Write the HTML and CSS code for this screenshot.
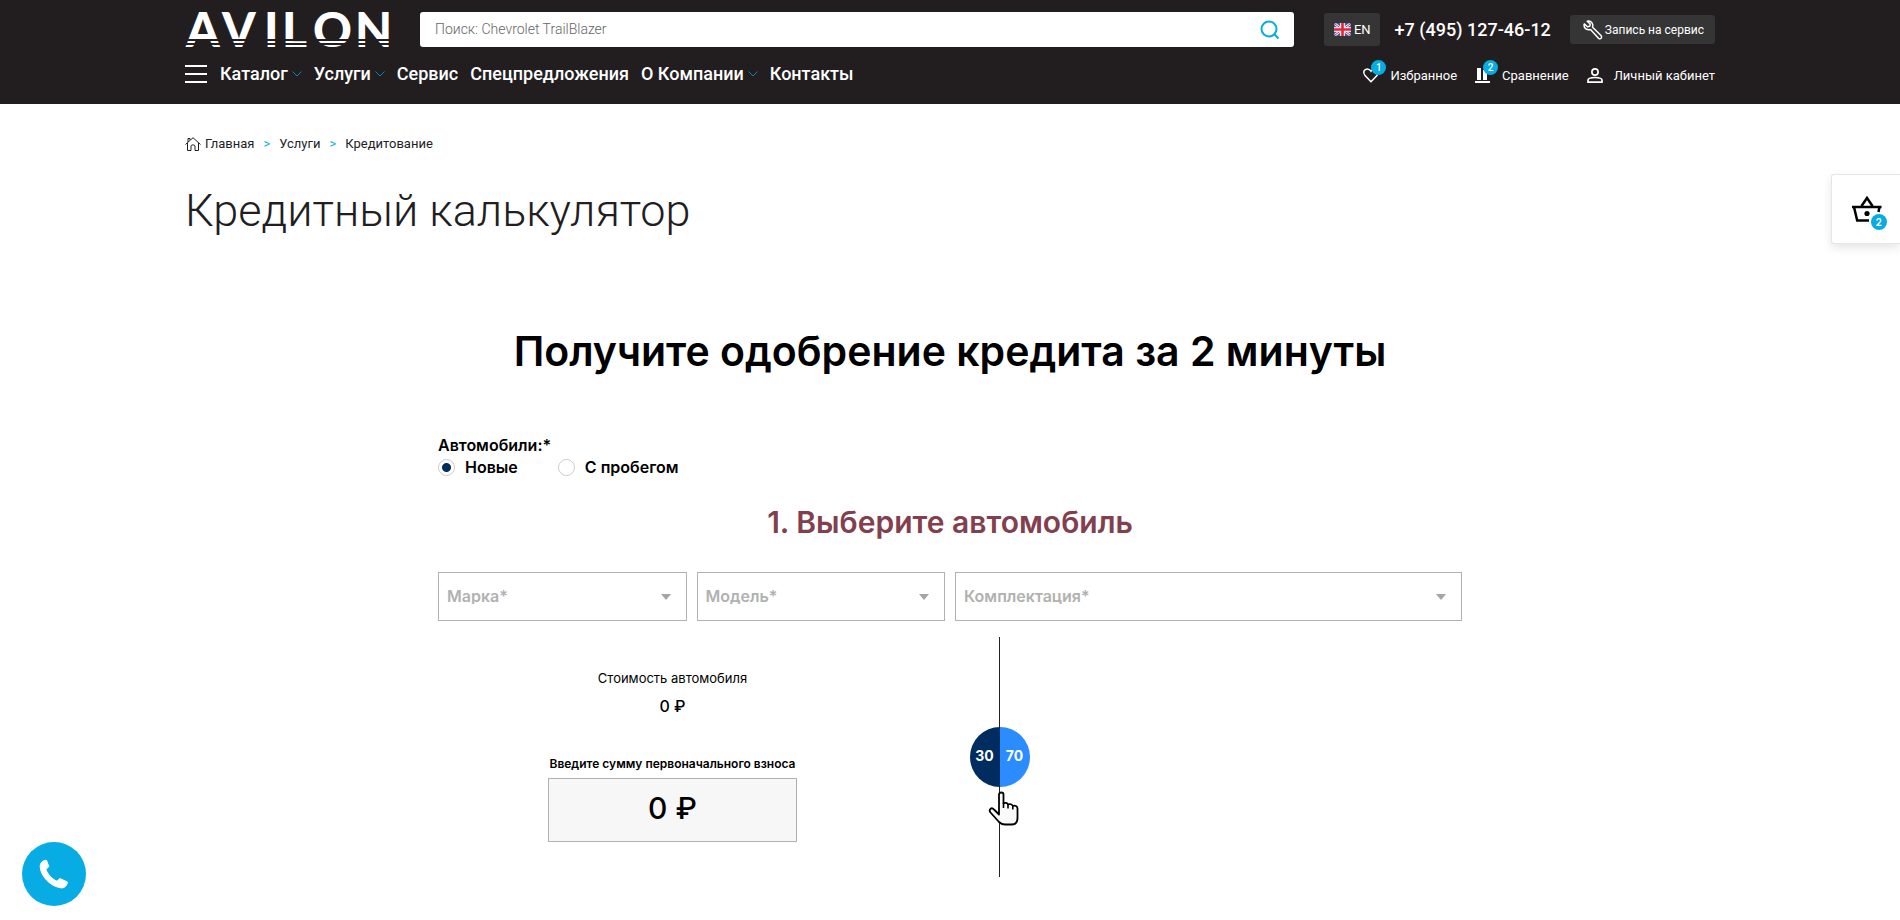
FILE: index.html
```html
<!DOCTYPE html>
<html lang="ru">
<head>
<meta charset="utf-8">
<meta name="viewport" content="width=device-width, initial-scale=1">
<title>Кредитный калькулятор</title>
<link rel="stylesheet" href="styles.css">
</head>
<body>
<header class="header">
  <div class="container header-top">
    <a class="logo" href="#" aria-label="AVILON">
      <svg width="205" height="35" viewBox="0 0 205 35">
        <g class="logo-text">
          <text x="1 37 79 97 128 170" y="35">AVILON</text>
        </g>
        <path d="M0 28H205M0 32H205" stroke="#221e1f" stroke-width="2"/>
      </svg>
    </a>
    <form class="search" role="search">
      <input class="search-input" type="search" placeholder="Поиск: Chevrolet TrailBlazer" aria-label="Поиск">
      <button class="search-button" type="button" aria-label="Найти">
        <svg width="20" height="20" viewBox="0 0 20 20" fill="none" stroke="#06ace3" stroke-width="2"><circle cx="9" cy="9" r="7.500"/><path d="M14.300 14.300 18.500 18.500"/></svg>
      </button>
    </form>
    <button class="lang" type="button">
      <svg width="17" height="13" viewBox="0 0 17 13"><path fill="#3d58a8" d="M0 0H17V13H0z"/><path d="M1 1 16 12M16 1 1 12" stroke="#fff" stroke-width="2.600"/><path d="M1 1 16 12M16 1 1 12" stroke="#e0243b" stroke-width="1"/><path d="M8.500 0V13M0 6.500H17" stroke="#fff" stroke-width="4.600"/><path d="M8.500 0V13M0 6.500H17" stroke="#e0243b" stroke-width="2.600"/></svg>
      EN
    </button>
    <a class="phone" href="tel:+74951274612">+7 (495) 127-46-12</a>
    <button class="service" type="button">
      <svg width="20" height="20" viewBox="0 0 20 20" fill="none" stroke="#fff" stroke-width="1.500" stroke-linejoin="round"><path d="M5.500 1C8.500 1 10.500 4 9.600 7.200L18 15.500C19.800 17.500 17.300 20 15.500 18.200L7.500 9.600C4 10.600 1 8.300 1 5.200L1.300 3.900 4.400 6.800 6.800 6.200 7.200 4 4.200 1.200z"/></svg>
      Запись на сервис
    </button>
  </div>
  <div class="container header-bottom">
    <button class="burger" type="button" aria-label="Меню"><span></span><span></span><span></span></button>
    <nav class="nav">
      <a href="#">Каталог<svg class="chevron" width="10" height="6" viewBox="0 0 10 6"><path d="M.5.500 5 5 9.500.500"/></svg></a>
      <a href="#">Услуги<svg class="chevron" width="10" height="6" viewBox="0 0 10 6"><path d="M.5.500 5 5 9.500.500"/></svg></a>
      <a href="#">Сервис</a>
      <a href="#">Спецпредложения</a>
      <a href="#">О Компании<svg class="chevron" width="10" height="6" viewBox="0 0 10 6"><path d="M.5.500 5 5 9.500.500"/></svg></a>
      <a href="#">Контакты</a>
    </nav>
    <div class="account">
      <a href="#">
        <span class="icon">
          <svg width="16" height="15" viewBox="0 0 16 15" fill="none" stroke="#fff" stroke-width="1.500"><path d="M8 13.700 2 7.600C-.5 4.500 1 1 4.300 1 6 1 7.200 1.900 8 3.200 8.800 1.900 10 1 11.700 1 15 1 16.500 4.500 14 7.600z"/></svg>
          <span class="badge">1</span>
        </span>
        Избранное
      </a>
      <a href="#">
        <span class="icon">
          <svg width="16" height="15" viewBox="0 0 16 15" fill="#fff"><path d="M2 0H6V12H2zM8 2H12V12H8zM0 13H15V15H0z"/></svg>
          <span class="badge">2</span>
        </span>
        Сравнение
      </a>
      <a href="#">
        <span class="icon">
          <svg width="16" height="15" viewBox="0 0 16 15" fill="none" stroke="#fff" stroke-width="1.700"><circle cx="8" cy="4" r="3.100"/><path d="M1 14.100V12.300C1 10.600 4.500 9.500 8 9.500S15 10.600 15 12.300V14.100z"/></svg>
        </span>
        Личный кабинет
      </a>
    </div>
  </div>
</header>

<main class="container">
  <nav class="crumbs" aria-label="Навигация">
    <a href="#"><svg width="16" height="14" viewBox="0 0 16 14" fill="none" stroke="#221e1f"><path d="M.5 7.500 8 .7 15.500 7.500M2.500 6V13.500H6V9C6 7.500 10 7.500 10 9V13.500H13.500V6M3 5V1.500H5V3"/></svg>Главная</a>
    <span class="sep">&gt;</span>
    <a href="#">Услуги</a>
    <span class="sep">&gt;</span>
    <span>Кредитование</span>
  </nav>
  <h1 class="title">Кредитный калькулятор</h1>

  <form class="calc">
    <h2 class="calc-title">Получите одобрение кредита за 2 минуты</h2>
    <fieldset class="kind">
      <legend>Автомобили:*</legend>
      <div class="kind-options">
        <label><input type="radio" name="kind" checked>Новые</label>
        <label><input type="radio" name="kind">С пробегом</label>
      </div>
    </fieldset>
    <h3 class="step">1. Выберите автомобиль</h3>
    <div class="selects">
      <div class="select"><select aria-label="Марка"><option>Марка*</option></select></div>
      <div class="select"><select aria-label="Модель"><option>Модель*</option></select></div>
      <div class="select wide"><select aria-label="Комплектация"><option>Комплектация*</option></select></div>
    </div>
    <div class="payment">
      <div class="sums">
        <p class="price-label">Стоимость автомобиля</p>
        <p class="price">0 ₽</p>
        <label class="deposit-label" for="deposit">Введите сумму первоначального взноса</label>
        <input class="deposit" id="deposit" type="text" value="0 ₽">
      </div>
      <div class="slider">
        <div class="knob"><span>30</span><span>70</span></div>
        <svg class="hand" width="32" height="35" viewBox="0 0 32 35"><path d="M11 23.500V3.500C11 .8 15.500.8 15.500 3.500V12.500C17 11.300 19.500 11.800 20 13.500 22 12.500 24.300 13.300 24.800 15 27 14 29.500 15 29.500 17.500V27C29.500 31.500 27 33.500 23.500 33.500H17C14.500 33.500 12.500 32.500 11 31L2.500 21.500C.3 18.500 3.500 15.800 6 18.500z" fill="#fafafa" stroke="#000" stroke-width="1.800" stroke-linejoin="round"/><path d="M15.500 12V17M20 13.500V17.500M24.800 15V18.500" stroke="#000" stroke-width="1.600"/></svg>
      </div>
    </div>
  </form>
</main>

<a class="cart" href="#" aria-label="Корзина">
  <svg width="30" height="26" viewBox="0 0 30 26" fill="none" stroke="#000" stroke-width="2.500"><path d="M9.500 10 15 2 20.500 10M0 11H29.500M2 11 5.200 24.500H17M27.500 11 26.500 16"/><circle cx="15" cy="17.500" r="2.600" fill="#000" stroke="none"/></svg>
  <span class="badge cart-badge">2</span>
</a>
<button class="callback" type="button" aria-label="Позвонить">
  <svg width="30" height="30" viewBox="0 0 30 30"><path fill="#fff" d="M7.500 1.300 9.800 7.500 7 10.500C8.500 15 13 20 18 22.300L20.700 19.500 28.500 23C28 27 25 29.500 21.500 28.800 11 27 2 17.500 1.200 8 1 4 3.500 1.300 7.500 1.300z" stroke="#fff" stroke-linejoin="round"/></svg>
</button>
</body>
</html>
```

FILE: styles.css
```css
* { box-sizing: border-box; }
body { margin: 0; background: #fff; color: #221e1f; font-family: Roboto, sans-serif; font-size: 13px; line-height: 16px; }
a { color: inherit; text-decoration: none; }
button, input, select { font: inherit; color: inherit; }
button { border: 0; padding: 0; background: none; cursor: pointer; }
svg { display: block; flex: none; overflow: visible; }

.container { width: 100%; max-width: 1562px; margin: 0 auto; padding: 0 16px; }

.header { background: #221e1f; color: #fff; padding: 12px 0 18px; }
.header-top { display: flex; align-items: center; }
.logo-text { font-family: Lato, sans-serif; font-weight: 900; font-size: 48px; fill: #fff; }
.search { flex: 1; display: flex; margin: 0 30px; height: 35px; background: #fff; border-radius: 3px; }
.search-input { flex: 1; min-width: 0; border: 0; background: none; padding: 0 15px 2px; color: #221e1f; font-weight: 300; font-size: 14px; outline: 0; }
.search-input::placeholder { color: #666; opacity: 1; }
.search-button { padding: 0 14px; }
.lang, .service { display: flex; align-items: center; background: #353535; border-radius: 3px; }
.lang { gap: 3px; height: 33px; padding: 0 9px 0 10px; }
.phone { margin: 0 19px 0 15px; font-size: 18px; line-height: 24px; font-weight: 500; }
.service { gap: 2px; height: 29px; padding: 0 11px 0 13px; font-size: 12px; }

.header-bottom { display: flex; align-items: center; margin-top: 15px; }
.burger { display: grid; gap: 6px; width: 22px; margin-right: 13px; }
.burger span { height: 2px; background: #fff; }
.nav { display: flex; gap: 12px; font-size: 18px; line-height: 24px; font-weight: 500; }
.nav a { display: flex; align-items: center; gap: 4px; }
.chevron { fill: none; stroke: #0787b1; }
.account { display: flex; gap: 18px; margin-left: auto; padding-top: 3px; }
.account a { display: flex; align-items: center; gap: 11px; }
.icon { position: relative; }
.badge { position: absolute; left: 8px; top: -8px; width: 15px; height: 15px; border-radius: 50%; background: #06ace3; color: #fff; font-size: 10px; line-height: 15px; font-weight: 500; text-align: center; }

.crumbs { display: flex; align-items: center; gap: 9px; margin-top: 32px; }
.crumbs a { display: flex; align-items: center; gap: 4px; }
.sep { color: #06ace3; }
.title { margin: 32px 0 0; font-size: 45px; line-height: 54px; font-weight: 300; }

.calc { max-width: 1024px; margin: 83px auto 0; color: #000; font-family: Inter, sans-serif; }
.calc-title { margin: 0; font-size: 41px; line-height: 60px; font-weight: 600; text-align: center; }
.kind { margin: 53px 0 0; padding: 0; border: 0; font-size: 16px; line-height: 22px; font-weight: 600; }
.kind legend { padding: 0; }
.kind-options { display: flex; gap: 40px; }
.kind-options label { display: flex; align-items: center; gap: 10px; }
.kind-options input { appearance: none; width: 17px; height: 17px; margin: 0; border: 1px solid #ccc; border-radius: 50%; }
.kind-options input:checked { background: radial-gradient(circle, #002c5f 4px, #fff 5px); }
.step { margin: 26px 0 32px; font-size: 30px; line-height: 36px; font-weight: 600; color: #82404f; text-align: center; }
.selects { display: grid; grid-template-columns: repeat(4, 1fr); gap: 10px; }
.select { position: relative; }
.select::after { content: ""; position: absolute; right: 16px; top: 22px; border: 5px solid transparent; border-top: 6px solid #a5a5a5; border-bottom: 0; pointer-events: none; }
.wide { grid-column: span 2; }
.select select { display: block; appearance: none; width: 100%; height: 49px; padding: 0 32px 2px 8px; border: 1px solid #b1b1b1; border-radius: 0; background: #fff; color: #b1b1b1; font-size: 16px; font-weight: 600; }

.payment { display: grid; grid-template-columns: 469fr 185fr 370fr; margin-top: 16px; }
.sums { display: flex; flex-direction: column; align-items: center; padding-top: 33px; }
.price-label, .price { margin: 0; }
.price { margin: 8px 0 36px; font-size: 16px; line-height: 24px; font-weight: 500; }
.deposit-label { margin-bottom: 4px; font-size: 12px; line-height: 20px; font-weight: 600; }
.deposit { width: 249px; height: 64px; padding: 0 0 4px; border: 1px solid #b1b1b1; background: #f7f7f7; font-size: 30px; font-weight: 500; text-align: center; }
.slider { position: relative; height: 240px; background: linear-gradient(#222, #222) center / 1px 100% no-repeat; padding-top: 90px; }
.knob { display: flex; width: 60px; height: 60px; margin: 0 auto; border-radius: 50%; overflow: hidden; color: #fff; font-size: 14px; line-height: 58px; font-weight: 700; text-align: center; }
.knob span { flex: 1; background: #002c5f; }
.knob span + span { background: #2b8cff; }
.hand { position: absolute; left: calc(50% - 12px); top: 154px; }

.cart { position: fixed; right: 0; top: 174px; display: flex; width: 69px; height: 70px; padding: 21px 0 0 20px; border: 1px solid #e6e6e6; border-right: 0; border-radius: 3px 0 0 3px; background: #fff; box-shadow: 0 4px 10px rgba(0, 0, 0, .1); }
.cart-badge { left: 39px; top: 39px; width: 16px; height: 16px; line-height: 16px; font-family: Inter, sans-serif; font-weight: 700; }
.callback { position: fixed; left: 22px; bottom: 14px; display: grid; place-items: center; width: 64px; height: 64px; border-radius: 50%; background: #06ace3; }
```
